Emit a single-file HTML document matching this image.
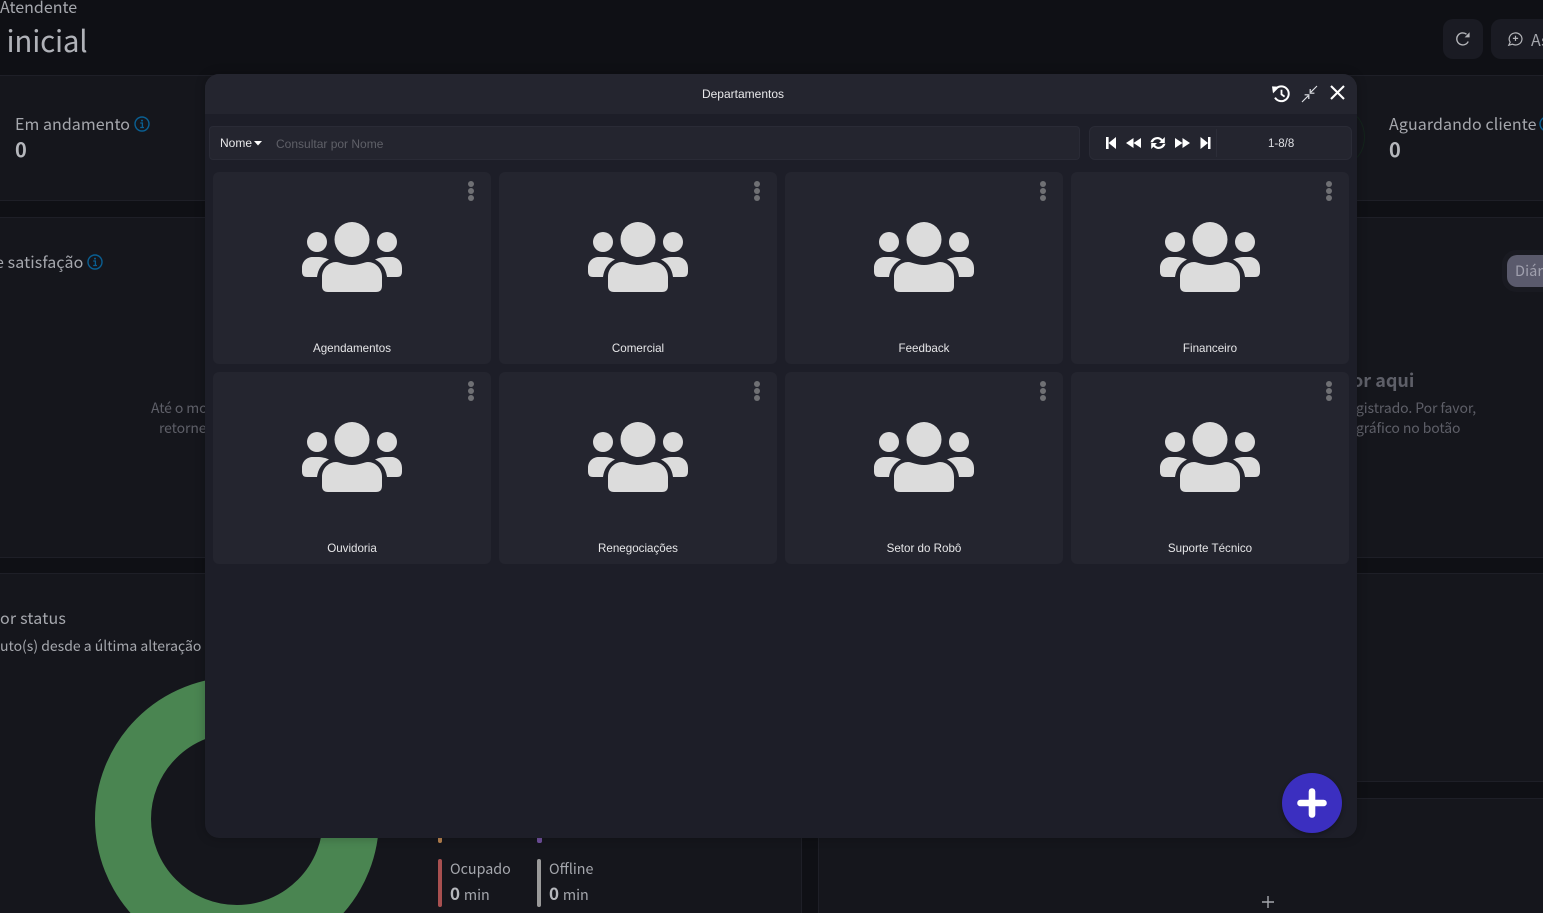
<!DOCTYPE html>
<html lang="pt">
<head>
<meta charset="utf-8">
<title>Tela inicial</title>
<style>
html,body{margin:0;padding:0;width:1543px;height:913px;overflow:hidden;background:#0f1015}
body{position:relative;font-family:"Noto Sans CJK JP","Liberation Sans",sans-serif;color:#a5a7ad}
.a{position:absolute;white-space:nowrap;line-height:1}
.c{position:absolute;background:#15161c;border-top:1px solid #1e1f27;border-bottom:1px solid #1e1f27;box-sizing:border-box}
.m{font-family:"Liberation Sans",sans-serif}
.card{position:absolute;width:278px;height:192px;background:#24252f;border-radius:6px}
.card svg{position:absolute;left:89px;top:50px}
.card i{position:absolute;left:255px;width:6px;height:6px;border-radius:50%;background:#6f7074}
.card span{position:absolute;left:0;right:0;top:170px;text-align:center;font:11.6px/14px "Liberation Sans",sans-serif;color:#e6e6e8}
</style>
</head>
<body>
<svg width="0" height="0" style="position:absolute">
<symbol id="grp" viewBox="0 0 100 70">
<g fill="#dcdcdc">
<circle cx="50" cy="17.5" r="17.5"/>
<circle cx="15" cy="20" r="10"/>
<circle cx="85" cy="20" r="10"/>
<path d="M0 50V46C0 39 5 35 11 35H15C20 35 24 36 27 37.5C20 41 16 47 15 55H5Q0 55 0 50Z"/>
<path d="M100 50V46C100 39 95 35 89 35H85C80 35 76 36 73 37.5C80 41 84 47 85 55H95Q100 55 100 50Z"/>
<path d="M20 62V55C20 46 27 40 34 40C38 40 42 43 50 43C58 43 62 40 66 40C73 40 80 46 80 55V64Q80 70 74 70H26Q20 70 20 64Z"/>
</g>
</symbol>
</svg>

<!-- background page -->
<div class="a" style="left:0;top:-2px;font-size:16px;color:#a5a7ad">Atendente</div>
<div class="a" style="left:6.5px;top:26px;font-size:29.5px;letter-spacing:-.2px;color:#b0b2b8">inicial</div>

<div class="a" style="left:1443px;top:19px;width:40px;height:40px;border-radius:10px;background:#1a1b23"></div>
<svg class="a" style="left:1455px;top:31px" width="16" height="16" viewBox="0 0 16 16" fill="none"><path d="M13.2 10.5A6 6 0 1 1 11.5 3.2" stroke="#b4b5b9" stroke-width="1.4"/><path d="M14.6 1.2V6.4H9.6Z" fill="#b4b5b9"/></svg>
<div class="a" style="left:1491px;top:19px;width:70px;height:40px;border-radius:10px;background:#1a1b23"></div>
<svg class="a" style="left:1507px;top:31px" width="17" height="16" viewBox="0 0 17 16" fill="none" stroke="#b4b5b9" stroke-width="1.2"><path d="M3.2 11.2A6.4 6 0 1 1 5.5 13.2L1.8 14.2Z"/><path d="M8.5 4.8V10M5.9 7.4H11.1"/></svg>
<div class="a" style="left:1531px;top:31px;font-size:16px;color:#a5a7ad">As</div>

<div class="c" style="left:0;top:75px;width:1543px;height:126px"></div>
<div class="c" style="left:0;top:217px;width:1543px;height:341px"></div>
<div class="c" style="left:0;top:573px;width:802px;height:340px;border-bottom:0;border-right:1px solid #1e1f27"></div>
<div class="c" style="left:818px;top:573px;width:725px;height:209px"></div>
<div class="c" style="left:818px;top:798px;width:725px;height:115px;border-bottom:0;border-left:1px solid #1e1f27"></div>

<div class="a" style="left:15px;top:115px;font-size:16px;letter-spacing:.05px">Em andamento</div>
<svg class="a" style="left:134px;top:116px" width="16" height="16" viewBox="0 0 16 16" fill="none"><circle cx="8" cy="8" r="7" stroke="#0a5f92" stroke-width="1.4"/><path d="M6.2 7H8.4V11.5M6.2 11.5H10" stroke="#0a5f92" stroke-width="1.3"/><circle cx="8" cy="4.6" r="1" fill="#0a5f92"/></svg>
<div class="a" style="left:15px;top:139px;font-size:20px;font-weight:700;color:#b5b7bc">0</div>

<div class="a" style="left:1389px;top:115px;font-size:16px;letter-spacing:.1px">Aguardando cliente</div>
<svg class="a" style="left:1539px;top:116px" width="16" height="16" viewBox="0 0 16 16" fill="none"><circle cx="8" cy="8" r="7" stroke="#0a5f92" stroke-width="1.4"/></svg>
<div class="a" style="left:1389px;top:139px;font-size:20px;font-weight:700;color:#b5b7bc">0</div>
<div class="a" style="left:1330px;top:112px;width:35px;height:50px;border-radius:50%;border:1px solid #14241c;box-sizing:border-box"></div>

<div class="a" style="left:-5px;top:253px;font-size:16px;letter-spacing:.1px">e satisfação</div>
<svg class="a" style="left:87px;top:254px" width="16" height="16" viewBox="0 0 16 16" fill="none"><circle cx="8" cy="8" r="7" stroke="#0a5f92" stroke-width="1.4"/><path d="M6.2 7H8.4V11.5M6.2 11.5H10" stroke="#0a5f92" stroke-width="1.3"/><circle cx="8" cy="4.6" r="1" fill="#0a5f92"/></svg>

<div class="a" style="left:151px;top:401px;font-size:14px;letter-spacing:-.1px;color:#5e5f68">Até o mo</div>
<div class="a" style="left:159px;top:421px;font-size:14px;letter-spacing:-.1px;color:#5e5f68">retorne</div>

<div class="a" style="left:1352px;top:371px;font-size:18px;font-weight:700;color:#5e5f68">or aqui</div>
<div class="a" style="left:1356px;top:401px;font-size:14px;letter-spacing:-.1px;color:#5e5f68">gistrado. Por favor,</div>
<div class="a" style="left:1356px;top:421px;font-size:14px;letter-spacing:-.1px;color:#5e5f68">gráfico no botão</div>

<div class="a" style="left:1502px;top:250px;width:60px;height:42px;border-radius:14px;background:#191a21"></div>
<div class="a" style="left:1507px;top:255px;width:60px;height:32px;border-radius:10px;background:#5a5a6c"></div>
<div class="a" style="left:1515px;top:264px;font-size:14.5px;letter-spacing:.1px;color:#a0a0ae">Diár</div>

<div class="a" style="left:0;top:609px;font-size:16px;letter-spacing:.2px">or status</div>
<div class="a" style="left:0;top:639px;font-size:14px">uto(s) desde a última alteração</div>

<svg class="a" style="left:90px;top:670px" width="300" height="243" viewBox="0 0 300 243"><circle cx="147" cy="149" r="114" fill="none" stroke="#4a8551" stroke-width="56"/></svg>

<div class="a" style="left:438px;top:830px;width:4px;height:13px;border-radius:2px;background:#b5804e"></div>
<div class="a" style="left:537px;top:830px;width:5px;height:13px;border-radius:2px;background:#6f4f9c"></div>
<div class="a" style="left:438px;top:859px;width:4px;height:48px;border-radius:2px;background:#a85050"></div>
<div class="a" style="left:537px;top:859px;width:4px;height:48px;border-radius:2px;background:#9a9a9a"></div>
<div class="a" style="left:450px;top:862px;font-size:14.3px">Ocupado</div>
<div class="a" style="left:549px;top:862px;font-size:14.3px">Offline</div>
<div class="a" style="left:450px;top:884px;font-size:17px;color:#a5a7ad"><b style="color:#b5b7bc">0</b> <span style="font-size:14.3px">min</span></div>
<div class="a" style="left:549px;top:884px;font-size:17px;color:#a5a7ad"><b style="color:#b5b7bc">0</b> <span style="font-size:14.3px">min</span></div>
<svg class="a" style="left:1262px;top:896px" width="12" height="12" viewBox="0 0 12 12"><path d="M6 0V12M0 6H12" stroke="#a5a7ad" stroke-width="1.4"/></svg>

<!-- modal -->
<div class="a" style="left:205px;top:74px;width:1152px;height:764px;background:#1d1e28;border-radius:14px;overflow:hidden;box-shadow:0 0 10px rgba(0,0,0,.25)">
  <div style="position:absolute;left:0;top:0;right:0;height:40px;background:#24252f"></div>
</div>
<div class="a m" style="left:643px;top:88px;width:200px;text-align:center;font-size:12px;color:#e8e8ea">Departamentos</div>

<!-- history -->
<svg class="a" style="left:1271px;top:84px" width="20" height="20" viewBox="0 0 20 20" fill="none"><path d="M4.5 5.2A7.4 7.4 0 1 1 4 13.6" stroke="#fff" stroke-width="2"/><path d="M1 2.4L8.6 2.8L2 9.4Z" fill="#fff"/><path d="M10.5 5.8V10.4L13.6 12.6" stroke="#fff" stroke-width="1.8"/></svg>
<!-- compress -->
<svg class="a" style="left:1301px;top:85px" width="17" height="18" viewBox="0 0 17 18" fill="none" stroke="#dfe1e6" stroke-width="1.1"><path d="M1 17L7.2 10.8M16 1L9.8 7.2"/><path d="M3.6 9.8H7.8V14M13.4 8.2H9.2V4" stroke-width="1.2"/></svg>
<!-- close -->
<svg class="a" style="left:1330px;top:85px" width="15" height="15" viewBox="0 0 15 15"><path d="M1 1L14 14M14 1L1 14" stroke="#fff" stroke-width="2.1"/></svg>

<!-- search -->
<div class="a" style="left:209px;top:126px;width:871px;height:34px;box-sizing:border-box;background:#24252f;border:1px solid #2a2b36;border-radius:4px"></div>
<div class="a m" style="left:220px;top:137px;font-size:12px;color:#e8e8ea">Nome</div>
<svg class="a" style="left:254px;top:141px" width="8" height="5" viewBox="0 0 8 5"><path d="M0 0H8L4 4.5Z" fill="#fff"/></svg>
<div class="a m" style="left:276px;top:138px;font-size:12px;color:#5f6068">Consultar por Nome</div>

<!-- pagination -->
<div class="a" style="left:1089px;top:126px;width:263px;height:34px;box-sizing:border-box;background:#24252f;border:1px solid #2a2b36;border-radius:6px"></div>
<div class="a" style="left:1216px;top:129px;width:1px;height:28px;background:#2c2d38"></div>
<svg class="a" style="left:1105px;top:136px" width="108" height="14" viewBox="0 0 108 14" fill="#fff">
<path d="M1 1H3.6V13H1ZM3.6 7L11 1V13Z"/>
<path d="M21 7L28.5 2V12ZM28.5 7L36 2V12Z"/>
<path d="M45.5 6.2A7 7 0 0 1 57.5 3.4L59.8 1V7H54L56 5A4.6 4.6 0 0 0 48 6.2ZM60.5 7.8A7 7 0 0 1 48.5 10.6L46.2 13V7H52L50 9A4.6 4.6 0 0 0 58 7.8Z"/>
<path d="M70 2L77.5 7L70 12ZM77.5 2L85 7L77.5 12Z"/>
<path d="M95.5 1L103 7L95.5 13ZM103 1H105.5V13H103Z"/>
</svg>
<div class="a m" style="left:1268px;top:139px;font-size:11.5px;color:#dfe0e4">1-8/8</div>

<!-- cards -->
<div class="card" style="left:213px;top:172px"><i style="top:9px"></i><i style="top:16px"></i><i style="top:23px"></i><svg width="100" height="70"><use href="#grp"/></svg><span>Agendamentos</span></div>
<div class="card" style="left:499px;top:172px"><i style="top:9px"></i><i style="top:16px"></i><i style="top:23px"></i><svg width="100" height="70"><use href="#grp"/></svg><span>Comercial</span></div>
<div class="card" style="left:785px;top:172px"><i style="top:9px"></i><i style="top:16px"></i><i style="top:23px"></i><svg width="100" height="70"><use href="#grp"/></svg><span>Feedback</span></div>
<div class="card" style="left:1071px;top:172px"><i style="top:9px"></i><i style="top:16px"></i><i style="top:23px"></i><svg width="100" height="70"><use href="#grp"/></svg><span>Financeiro</span></div>
<div class="card" style="left:213px;top:372px"><i style="top:9px"></i><i style="top:16px"></i><i style="top:23px"></i><svg width="100" height="70"><use href="#grp"/></svg><span>Ouvidoria</span></div>
<div class="card" style="left:499px;top:372px"><i style="top:9px"></i><i style="top:16px"></i><i style="top:23px"></i><svg width="100" height="70"><use href="#grp"/></svg><span>Renegociações</span></div>
<div class="card" style="left:785px;top:372px"><i style="top:9px"></i><i style="top:16px"></i><i style="top:23px"></i><svg width="100" height="70"><use href="#grp"/></svg><span>Setor do Robô</span></div>
<div class="card" style="left:1071px;top:372px"><i style="top:9px"></i><i style="top:16px"></i><i style="top:23px"></i><svg width="100" height="70"><use href="#grp"/></svg><span>Suporte Técnico</span></div>

<!-- FAB -->
<div class="a" style="left:1282px;top:773px;width:60px;height:60px;border-radius:50%;background:#3b2fc0;box-shadow:0 2px 5px rgba(0,0,0,.3)"></div>
<svg class="a" style="left:1297px;top:788px" width="30" height="30" viewBox="0 0 30 30"><path d="M15 3.5V26.5M3.5 15H26.5" stroke="#fff" stroke-width="6.6" stroke-linecap="round"/></svg>
</body>
</html>
